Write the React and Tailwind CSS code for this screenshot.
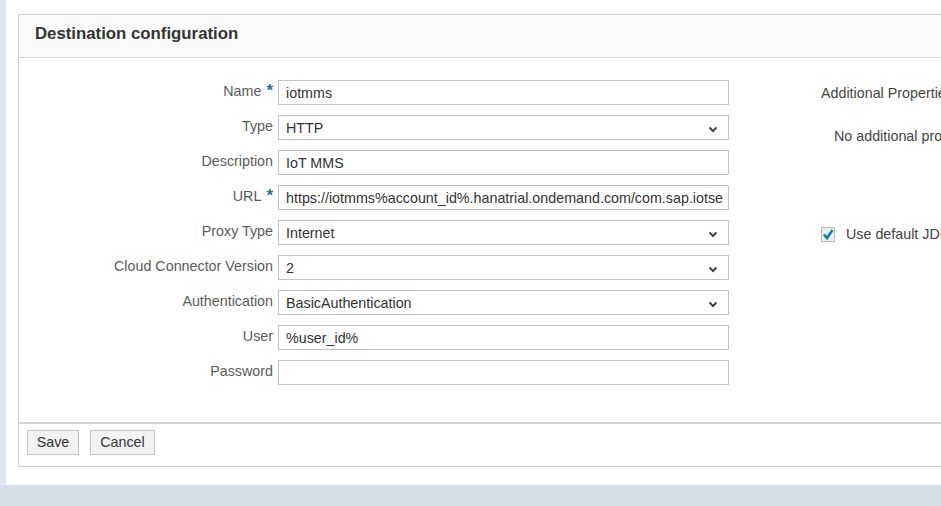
const font = { fontFamily: '"Liberation Sans", Arial, sans-serif' };

const rows = [
  { label: "Name", required: true, value: "iotmms" },
  { label: "Type", select: true, value: "HTTP" },
  { label: "Description", value: "IoT MMS" },
  { label: "URL", required: true, value: "https://iotmms%account_id%.hanatrial.ondemand.com/com.sap.iotse" },
  { label: "Proxy Type", select: true, value: "Internet" },
  { label: "Cloud Connector Version", select: true, value: "2" },
  { label: "Authentication", select: true, value: "BasicAuthentication" },
  { label: "User", value: "%user_id%" },
  { label: "Password", value: "" },
];

function Chevron() {
  return (
    <svg width="10" height="7" viewBox="0 0 10 7" className="absolute right-[10px] top-[10px]">
      <path d="M1.5 1.5 L5 5 L8.5 1.5" fill="none" stroke="#444" strokeWidth="2" />
    </svg>
  );
}

function Field({ row }) {
  return (
    <div className="flex h-[25px] items-start">
      <div className="flex w-[259px] shrink-0 justify-end pt-[3px] pr-[5px] text-[14.3px] leading-[16px] text-[#5a5a5a] whitespace-nowrap">
        <span>{row.label}</span>
        {row.required && (
          <span className="ml-[5px] text-[17px] font-bold leading-[16px] text-[#2c6e96]">*</span>
        )}
      </div>
      <div className="relative h-[25px] w-[451px] shrink-0 overflow-hidden border border-[#c4c4c4] bg-white">
        <div className="pl-[7px] pr-[6px] pt-[4px] text-[14.3px] leading-[16px] text-[#333] whitespace-nowrap overflow-hidden">
          {row.value}
        </div>
        {row.select && <Chevron />}
      </div>
    </div>
  );
}

function Btn({ children, w }) {
  return (
    <button className={`h-[25px] ${w} border border-[#c4c4c4] bg-[#f3f3f3] text-[14.3px] text-[#333]`}>
      {children}
    </button>
  );
}

export default function App() {
  return (
    <div className="flex h-[506px] w-[941px] flex-col overflow-hidden bg-[#d5dee6]" style={font}>
      <div className="flex h-[485px] shrink-0 bg-[#dde8f0]">
        <div className="ml-[6px] flex-1 bg-white pt-[14px] pl-[12px]">
          <div className="h-[453px] w-[1000px] border border-r-0 border-[#cfcfcf] flex flex-col">
            <div className="h-[43px] shrink-0 border-b border-[#d6d6d6] bg-[#fbfbfb] pl-[16px] pt-[9px] text-[16.8px] font-bold leading-[20px] text-[#333]">
              Destination configuration
            </div>
            <div className="flex flex-1 pt-[22px]">
              <div className="flex flex-col gap-[10px]">
                {rows.map((r) => (
                  <Field key={r.label} row={r} />
                ))}
              </div>
              <div className="ml-[92px] flex flex-col text-[14.3px] leading-[16px] text-[#444] whitespace-nowrap">
                <div className="pt-[5px]">Additional Properties</div>
                <div className="mt-[27px] pl-[13px]">No additional properties defined</div>
                <div className="mt-[82px] flex items-center gap-[11px]">
                  <svg width="14" height="15" viewBox="0 0 14 15">
                    <rect x="0.5" y="0.5" width="13" height="14" fill="#eeeeee" stroke="#bdbdbd" />
                    <path d="M3 7.5 L6 11 L11.5 3" fill="none" stroke="#0d7fa6" strokeWidth="2.6" />
                  </svg>
                  <span>Use default JDK truststore</span>
                </div>
              </div>
            </div>
            <div className="flex h-[44px] shrink-0 gap-[11px] border-t-2 border-[#d6d6d6] pl-[8px] pt-[6px]">
              <Btn w="w-[52px]">Save</Btn>
              <Btn w="w-[65px]">Cancel</Btn>
            </div>
          </div>
        </div>
      </div>
    </div>
  );
}
